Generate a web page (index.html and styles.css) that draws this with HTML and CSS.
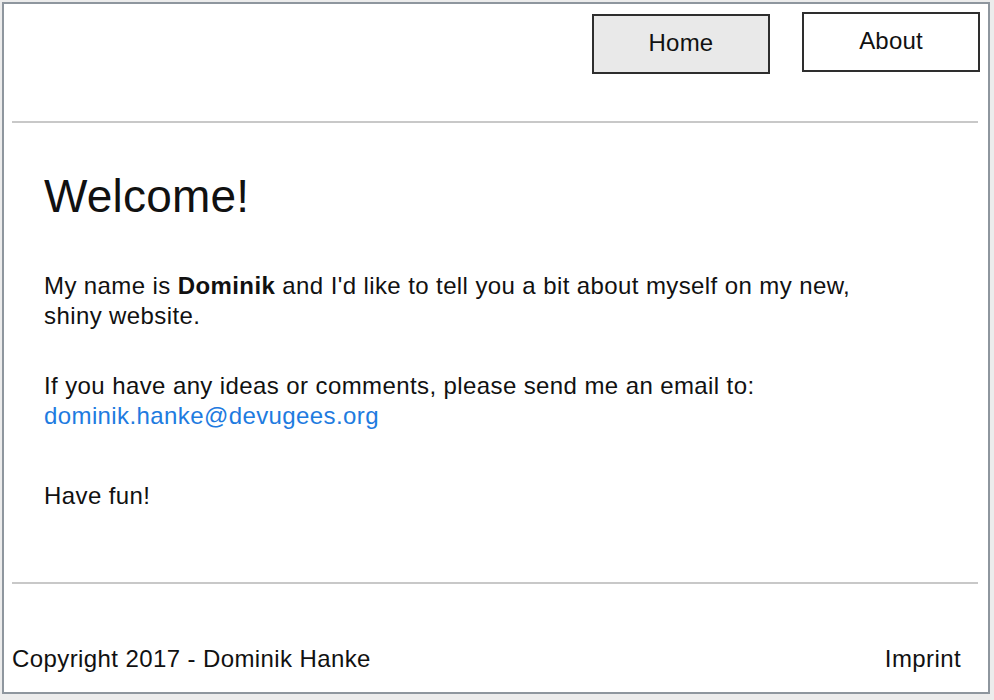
FILE: index.html
```html
<!DOCTYPE html>
<html lang="en">
<head>
<meta charset="utf-8">
<title>Dominik Hanke</title>
<link rel="stylesheet" href="styles.css">
</head>
<body>
<div class="frame">
  <header class="header">
    <a class="nav-btn nav-home" href="#">Home</a>
    <a class="nav-btn nav-about" href="#">About</a>
  </header>
  <hr class="rule rule-top">
  <main class="content">
    <h1 class="title">Welcome!</h1>
    <p class="para">My name is <strong>Dominik</strong> and I'd like to tell you a bit about myself on my new,<br>shiny website.</p>
    <p class="para">If you have any ideas or comments, please send me an email to:<br><a class="mail" href="#">dominik.hanke@devugees.org</a></p>
    <p class="para para-last">Have fun!</p>
  </main>
  <hr class="rule rule-bottom">
  <footer class="footer">
    <span class="copy">Copyright 2017 - Dominik Hanke</span>
    <a class="imprint" href="#">Imprint</a>
  </footer>
</div>
</body>
</html>
```

FILE: styles.css
```css
html, body {
  margin: 0;
  padding: 0;
}
body {
  background: #ececec;
  padding: 2px;
  font-family: "Liberation Sans", Arial, Helvetica, sans-serif;
  color: #111;
}
.frame {
  box-sizing: border-box;
  width: 988px;
  height: 692px;
  border: 2px solid #8e969e;
  background: #fff;
  display: flex;
  flex-direction: column;
}
.header {
  display: flex;
  justify-content: flex-end;
  align-items: flex-start;
  gap: 32px;
  padding: 8px 8px 0 0;
}
.nav-btn {
  box-sizing: border-box;
  width: 178px;
  height: 60px;
  border: 2px solid #2e2e2e;
  display: flex;
  align-items: center;
  justify-content: center;
  font-size: 24px;
  letter-spacing: 0.2px;
  color: #111;
  text-decoration: none;
  padding-bottom: 2px;
}
.nav-home {
  background: #e9e9e9;
  margin-top: 2px;
}
.nav-about {
  background: #fff;
}
.rule {
  border: none;
  height: 2px;
  background: #c8c8c8;
  margin: 0 10px 0 8px;
}
.rule-top {
  margin-top: 47px;
}
.content {
  padding: 47px 40px 0;
}
.title {
  margin: 0;
  font-size: 46px;
  line-height: 53px;
  font-weight: normal;
  letter-spacing: 0.2px;
}
.para {
  margin: 48px 0 0;
  font-size: 24px;
  line-height: 30px;
  letter-spacing: 0.4px;
}
.para + .para {
  margin-top: 40px;
}
.para.para-last {
  margin-top: 50px;
}
.mail {
  color: #1e7be0;
  text-decoration: none;
}
.rule-bottom {
  margin-top: 71px;
}
.footer {
  display: flex;
  justify-content: space-between;
  padding: 60px 27px 0 8px;
  font-size: 24px;
  line-height: 30px;
  letter-spacing: 0.4px;
}
.imprint {
  color: #111;
  text-decoration: none;
}
```
